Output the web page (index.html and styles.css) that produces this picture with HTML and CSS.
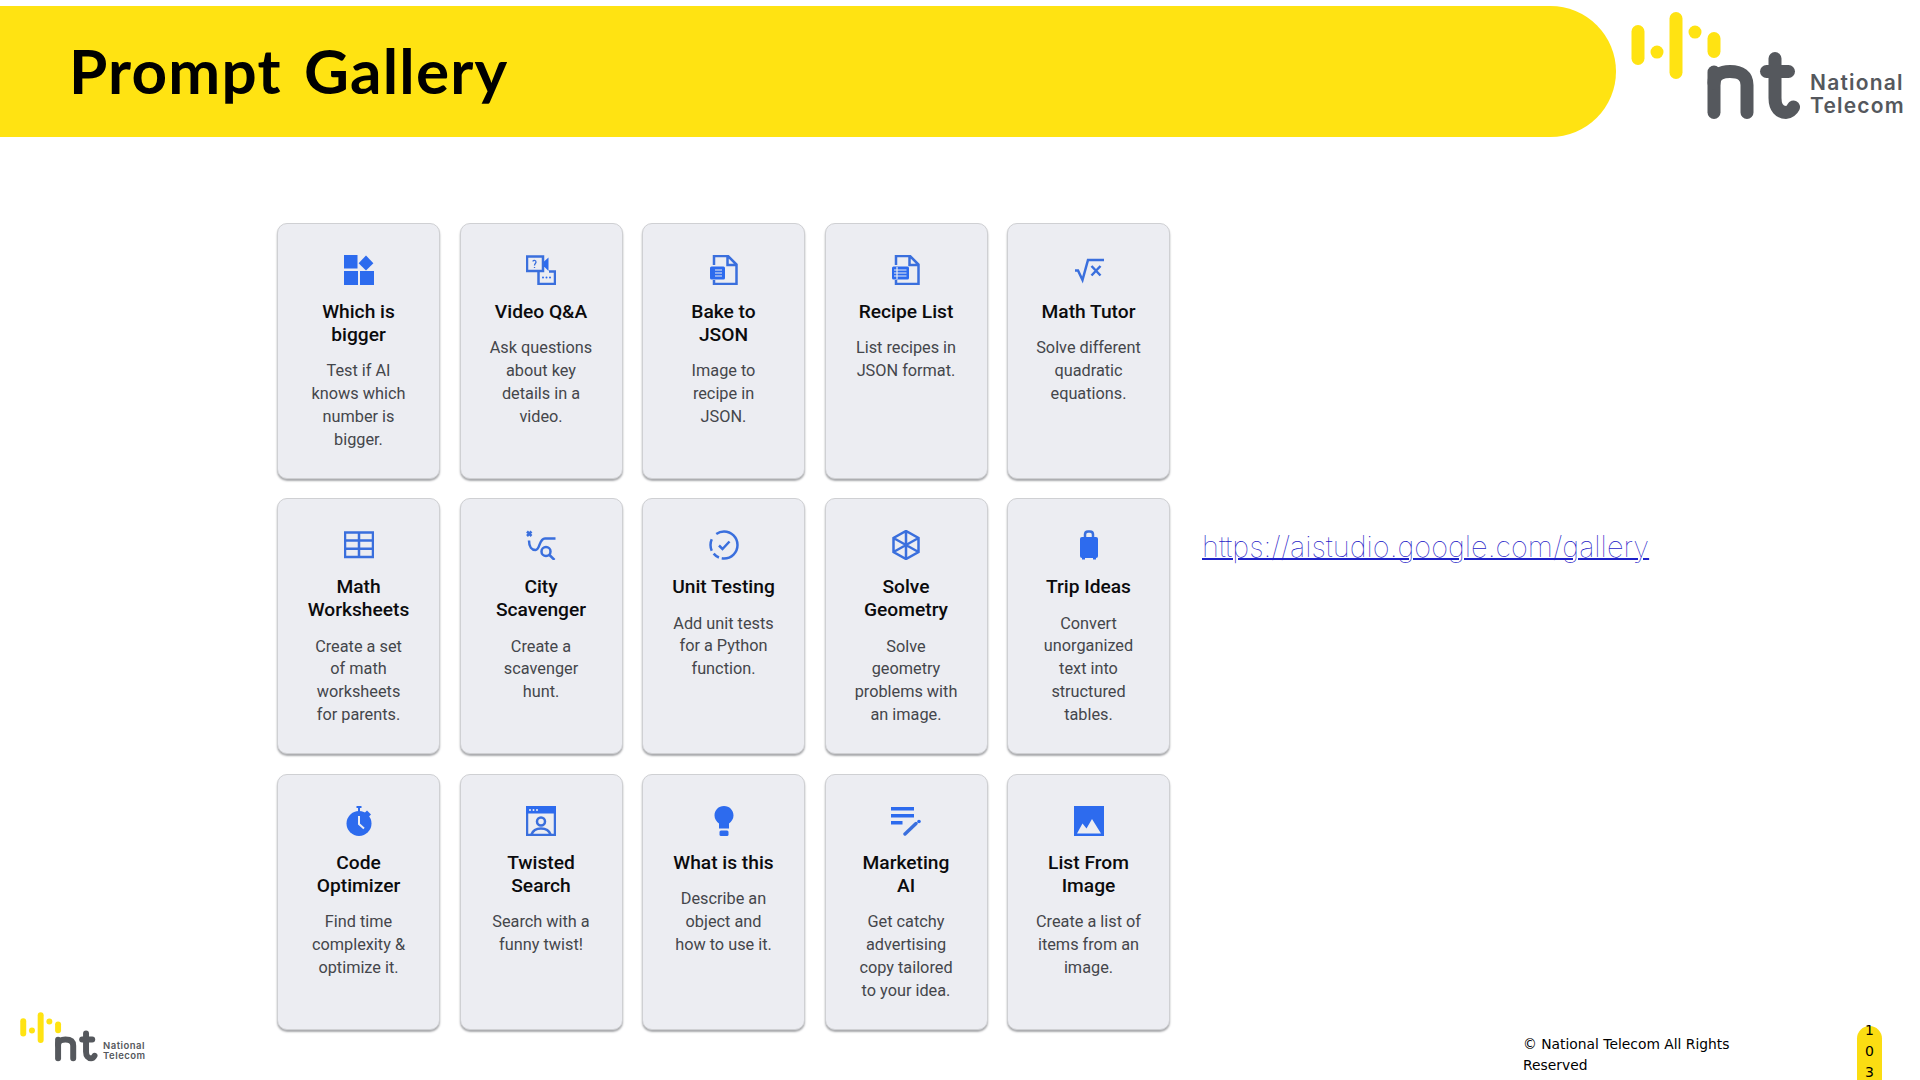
FILE: index.html
```html
<!DOCTYPE html>
<html lang="en">
<head>
<meta charset="utf-8">
<title>Prompt Gallery</title>
<link rel="stylesheet" href="styles.css">
</head>
<body>
<svg class="defs" width="0" height="0" aria-hidden="true">
  <symbol id="nt-mark" viewBox="0 0 170 120">
    <g class="mark-y">
      <path d="M7 26.500V53.500"/><path d="M26 47V47.100"/><path d="M45 13.500V67.500"/><path d="M64 27V27.100"/><path d="M83 33.500V46.500"/>
    </g>
    <g class="mark-g">
      <path d="M83 107.500V67"/><path d="M83 78C83 70 90 66.500 99 66.500C110 66.500 116 71 116 80V107.500"/>
      <path d="M144 53.500V93C144 103 149 107.500 155 107.500C158 107.500 161 105 162.500 102"/><path d="M135.500 66.500H157.500"/>
    </g>
  </symbol>
</svg>

<header class="head">
  <div class="banner"><h1 class="page-title">Prompt Gallery</h1></div>
  <div class="logo logo-big">
    <svg class="mark" viewBox="0 0 170 120"><use href="#nt-mark"/></svg>
    <div class="wordmark">National<br>Telecom</div>
  </div>
</header>

<div class="content">
  <div class="left-rail">
    <div class="logo logo-small">
      <svg class="mark" viewBox="0 0 170 120"><use href="#nt-mark"/></svg>
      <div class="wordmark">National<br>Telecom</div>
    </div>
  </div>

  <main class="gallery">
    <article class="card">
      <svg class="icon" viewBox="0 0 30 30"><g class="f"><rect x="0" y="0" width="13.5" height="13.5"/><path d="M22 .6L29.4 8.2L22 15.6L14.6 8.2Z"/><rect x="0" y="16" width="14" height="14"/><rect x="16" y="16" width="14" height="14"/></g></svg>
      <h2>Which is<br>bigger</h2><p>Test if AI<br>knows which<br>number is<br>bigger.</p>
    </article>
    <article class="card">
      <svg class="icon" viewBox="0 0 30 30"><g class="s"><rect x="1" y="1.5" width="16" height="14.5"/><path d="M12.5 16V29H29V16.500H23"/><path d="M7 6.500C7 5 10 5 10 7C10 8.500 8.500 8.500 8.500 10.500M8.500 12V13" class="thin"/></g><path class="f" d="M18 6.500L22.500 2.500V16L18 11.500Z"/><g class="f"><circle cx="17" cy="22.500" r="1"/><circle cx="20.500" cy="22.500" r="1"/><circle cx="24" cy="22.500" r="1"/></g></svg>
      <h2>Video Q&amp;A</h2><p>Ask questions<br>about key<br>details in a<br>video.</p>
    </article>
    <article class="card">
      <svg class="icon" viewBox="0 0 30 30"><path class="s" d="M5 10V1H19L27.500 9.500V29H5V25M18.500 1V10H27.500"/><rect class="f" x="1" y="11.500" width="15" height="13" rx="1.500"/><path class="cut" d="M6 15H13M6 18H13M6 21H13"/></svg>
      <h2>Bake to<br>JSON</h2><p>Image to<br>recipe in<br>JSON.</p>
    </article>
    <article class="card">
      <svg class="icon" viewBox="0 0 30 30"><path class="s" d="M5 10V1H19L27.500 9.500V29H5V25M18.500 1V10H27.500"/><rect class="f" x="1" y="11.500" width="17" height="13" rx="1.500"/><path class="cut" d="M3 15H15.500M3 18H15.500M3 21H15.500M6 12V24"/></svg>
      <h2>Recipe List</h2><p>List recipes in<br>JSON format.</p>
    </article>
    <article class="card">
      <svg class="icon" viewBox="0 0 30 30"><path class="s" d="M1 15.500H4L8.500 25L14 5H30M17.500 11L26.500 20.500M26.500 11L17.500 20.500"/></svg>
      <h2>Math Tutor</h2><p>Solve different<br>quadratic<br>equations.</p>
    </article>

    <article class="card">
      <svg class="icon" viewBox="0 0 30 30"><path class="s" d="M1 2.500H29V27H1ZM1 10.500H29M1 18.800H29M15 2.500V27"/></svg>
      <h2>Math<br>Worksheets</h2><p>Create a set<br>of math<br>worksheets<br>for parents.</p>
    </article>
    <article class="card">
      <svg class="icon" viewBox="0 0 30 30"><path class="s" d="M1 1.500L5.500 6M5.500 1.500L1 6M3 10.500C3 17 6 20 9.500 20C14 20 13 8.500 19 8.500H29.500"/><circle class="s" cx="20" cy="21.500" r="4.500"/><path class="s" d="M23.500 25L28.500 30"/></svg>
      <h2>City<br>Scavenger</h2><p>Create a<br>scavenger<br>hunt.</p>
    </article>
    <article class="card">
      <svg class="icon" viewBox="0 0 30 30"><circle class="s" cx="15" cy="15" r="13.500" pathLength="360" stroke-dasharray="100 12 28 15 50 30 125"/><path class="s" d="M10 15.500L13.500 19L20.500 11.500"/></svg>
      <h2>Unit Testing</h2><p>Add unit tests<br>for a Python<br>function.</p>
    </article>
    <article class="card">
      <svg class="icon" viewBox="0 0 30 30"><path class="s" d="M15 1L27.500 8V22L15 29L2.500 22V8ZM15 1V29M2.500 8L27.500 22M27.500 8L2.500 22"/></svg>
      <h2>Solve<br>Geometry</h2><p>Solve<br>geometry<br>problems with<br>an image.</p>
    </article>
    <article class="card">
      <svg class="icon" viewBox="0 0 30 30"><path class="s" d="M11 8V4.500C11 2.500 12 1.500 14 1.500H16C18 1.500 19 2.500 19 4.500V8"/><rect class="f" x="6" y="7" width="18" height="21" rx="2"/><rect class="f" x="8" y="27" width="3" height="2.500"/><rect class="f" x="19" y="27" width="3" height="2.500"/></svg>
      <h2>Trip Ideas</h2><p>Convert<br>unorganized<br>text into<br>structured<br>tables.</p>
    </article>

    <article class="card">
      <svg class="icon" viewBox="0 0 30 30"><g class="f"><circle cx="15" cy="17.500" r="12.500"/><rect x="12.500" y="0" width="5" height="2"/><rect x="14" y="1" width="2" height="5"/><path d="M23 4.500L27 8.500L24.500 11L20.500 7Z"/></g><path class="cut cut-w" d="M15 10V18L20 22.500"/></svg>
      <h2>Code<br>Optimizer</h2><p>Find time<br>complexity &amp;<br>optimize it.</p>
    </article>
    <article class="card">
      <svg class="icon" viewBox="0 0 30 30"><rect class="s" x="1" y="1" width="28" height="28"/><rect class="f" x="0" y="0" width="30" height="7.500"/><g class="dots"><circle cx="4" cy="4" r="1"/><circle cx="7.500" cy="4" r="1"/><circle cx="11" cy="4" r="1"/></g><circle class="s" cx="15" cy="15.500" r="4"/><path class="s" d="M5.500 28.500C7 24 10.500 22.500 15 22.500C19.500 22.500 23 24 24.500 28.500"/></svg>
      <h2>Twisted<br>Search</h2><p>Search with a<br>funny twist!</p>
    </article>
    <article class="card">
      <svg class="icon" viewBox="0 0 30 30"><g class="f"><path d="M15 0C9.500 0 5.500 4.200 5.500 9.500C5.500 13 7.500 15.500 10 17.500V22.500H20V17.500C22.500 15.500 24.500 13 24.500 9.500C24.500 4.200 20.500 0 15 0Z"/><rect x="10.500" y="24.500" width="9" height="5.500" rx="1.500"/></g></svg>
      <h2>What is this</h2><p>Describe an<br>object and<br>how to use it.</p>
    </article>
    <article class="card">
      <svg class="icon" viewBox="0 0 30 30"><g class="f"><rect x="0" y="1" width="23" height="3.500"/><rect x="0" y="8" width="23" height="3.500"/><rect x="0" y="15" width="11.500" height="3.500"/><circle cx="28" cy="15.500" r="1.800"/></g><path class="s s-thick" d="M14 28L25 17.500"/></svg>
      <h2>Marketing<br>AI</h2><p>Get catchy<br>advertising<br>copy tailored<br>to your idea.</p>
    </article>
    <article class="card">
      <svg class="icon" viewBox="0 0 30 30"><rect class="f" x="0" y="0" width="30" height="30"/><path class="peaks" d="M3 27.500L8.500 17.500L12.500 22.500L18 13L27 27.500Z"/></svg>
      <h2>List From<br>Image</h2><p>Create a list of<br>items from an<br>image.</p>
    </article>
  </main>

  <aside class="side">
    <a class="gallery-link" href="https://aistudio.google.com/gallery">https://aistudio.google.com/gallery</a>
    <footer class="foot">
      <div class="copy">© National Telecom All Rights Reserved</div>
      <div class="page-no"><span>103</span></div>
    </footer>
  </aside>
</div>
</body>
</html>
```

FILE: styles.css
```css
* { box-sizing: border-box; }
html, body { margin: 0; padding: 0; }
body {
  width: 1920px;
  height: 1080px;
  overflow: hidden;
  background: #fff;
  color: #000;
  font-family: Roboto, "Liberation Sans", sans-serif;
  display: flex;
  flex-direction: column;
}
.defs { position: absolute; }

/* header */
.head { display: flex; height: 137px; flex: none; }
.banner {
  width: 1616px;
  height: 131px;
  margin-top: 6px;
  flex: none;
  background: #ffe312;
  border-radius: 0 66px 66px 0;
  padding: 0 0 3px 69px;
  display: flex;
  align-items: center;
}
.page-title {
  margin: 0;
  font: 700 62px/1 Lato, sans-serif;
  letter-spacing: 1.2px;
  word-spacing: 6px;
}

/* logos */
.logo { display: flex; align-items: flex-end; }
.mark { display: block; flex: none; }
.mark-y path { stroke: #ffe312; stroke-width: 13; stroke-linecap: round; fill: none; }
.mark-g path { stroke: #55585d; stroke-width: 13; stroke-linecap: round; fill: none; }
.wordmark { color: #55585d; font-family: Inter, sans-serif; font-weight: 600; }
.logo-big { margin: 5px 0 0 15px; height: 120px; }
.logo-big .mark { width: 170px; height: 120px; }
.logo-big .wordmark { font-size: 21px; line-height: 22.500px; letter-spacing: 1.200px; margin: 0 0 8px 9px; }
.logo-small .mark { width: 78px; height: 55px; }
.logo-small .wordmark { font-size: 9.500px; line-height: 10px; letter-spacing: .5px; margin: 0 0 3px 5px; }

/* content */
.content { flex: 1; display: flex; min-height: 0; }
.left-rail { width: 277px; flex: none; padding: 0 0 16px 20px; display: flex; align-items: flex-end; }
.gallery {
  width: 892px;
  flex: none;
  margin-top: 85.700px;
  display: grid;
  grid-template-columns: repeat(5, 163px);
  grid-auto-rows: 256px;
  column-gap: 19.500px;
  row-gap: 19.500px;
  align-content: start;
}
.card {
  background: #ecedf2;
  border: 1px solid #cfd0d3;
  border-radius: 10px;
  box-shadow: 0 2px 2px #a9aaad;
  padding: 31px 2px 0;
  text-align: center;
}
.icon { display: block; width: 30px; height: 30px; margin: 0 auto 15px; }
.card h2 { margin: 0 0 14.500px; font-size: 19.200px; font-weight: 500; line-height: 23px; color: #0b0b0d; }
.card p { margin: 0; font-size: 16.300px; line-height: 22.800px; color: #44464b; }

/* icon paint */
.f { fill: #2d6bee; }
.s { fill: none; stroke: #3a6fdd; stroke-width: 2.500; }
.s-thick { stroke-width: 3.400; stroke-linecap: round; }
.thin { stroke-width: 1.300; }
.cut { fill: none; stroke: #ecedf2; stroke-width: 1.200; }
.cut-w { stroke-width: 2; }
.dots { fill: #ecedf2; }
.peaks { fill: #ecedf2; }

/* right side */
.side { flex: 1; min-width: 0; margin-left: 33px; display: flex; flex-direction: column; }
.gallery-link {
  margin-top: 391px;
  width: max-content;
  font: 100 29px/38px Inter, sans-serif;
  color: #1f22c8;
  text-decoration: underline;
  text-decoration-thickness: 2px;
}
.foot { margin-top: auto; margin-left: 321px; display: flex; align-items: flex-end; }
.copy {
  width: 230px;
  font: 13.850px/21px "DejaVu Sans", sans-serif;
  margin-bottom: 4px;
}
.page-no {
  margin-left: 104px;
  width: 25px;
  height: 54px;
  background: #fbdd12;
  border-radius: 13px 13px 0 0;
  display: flex;
  justify-content: center;
  align-items: flex-start;
}
.page-no span {
  margin-top: -6px;
  width: min-content;
  word-break: break-all;
  font: 14px/21px "DejaVu Sans", sans-serif;
}
```
